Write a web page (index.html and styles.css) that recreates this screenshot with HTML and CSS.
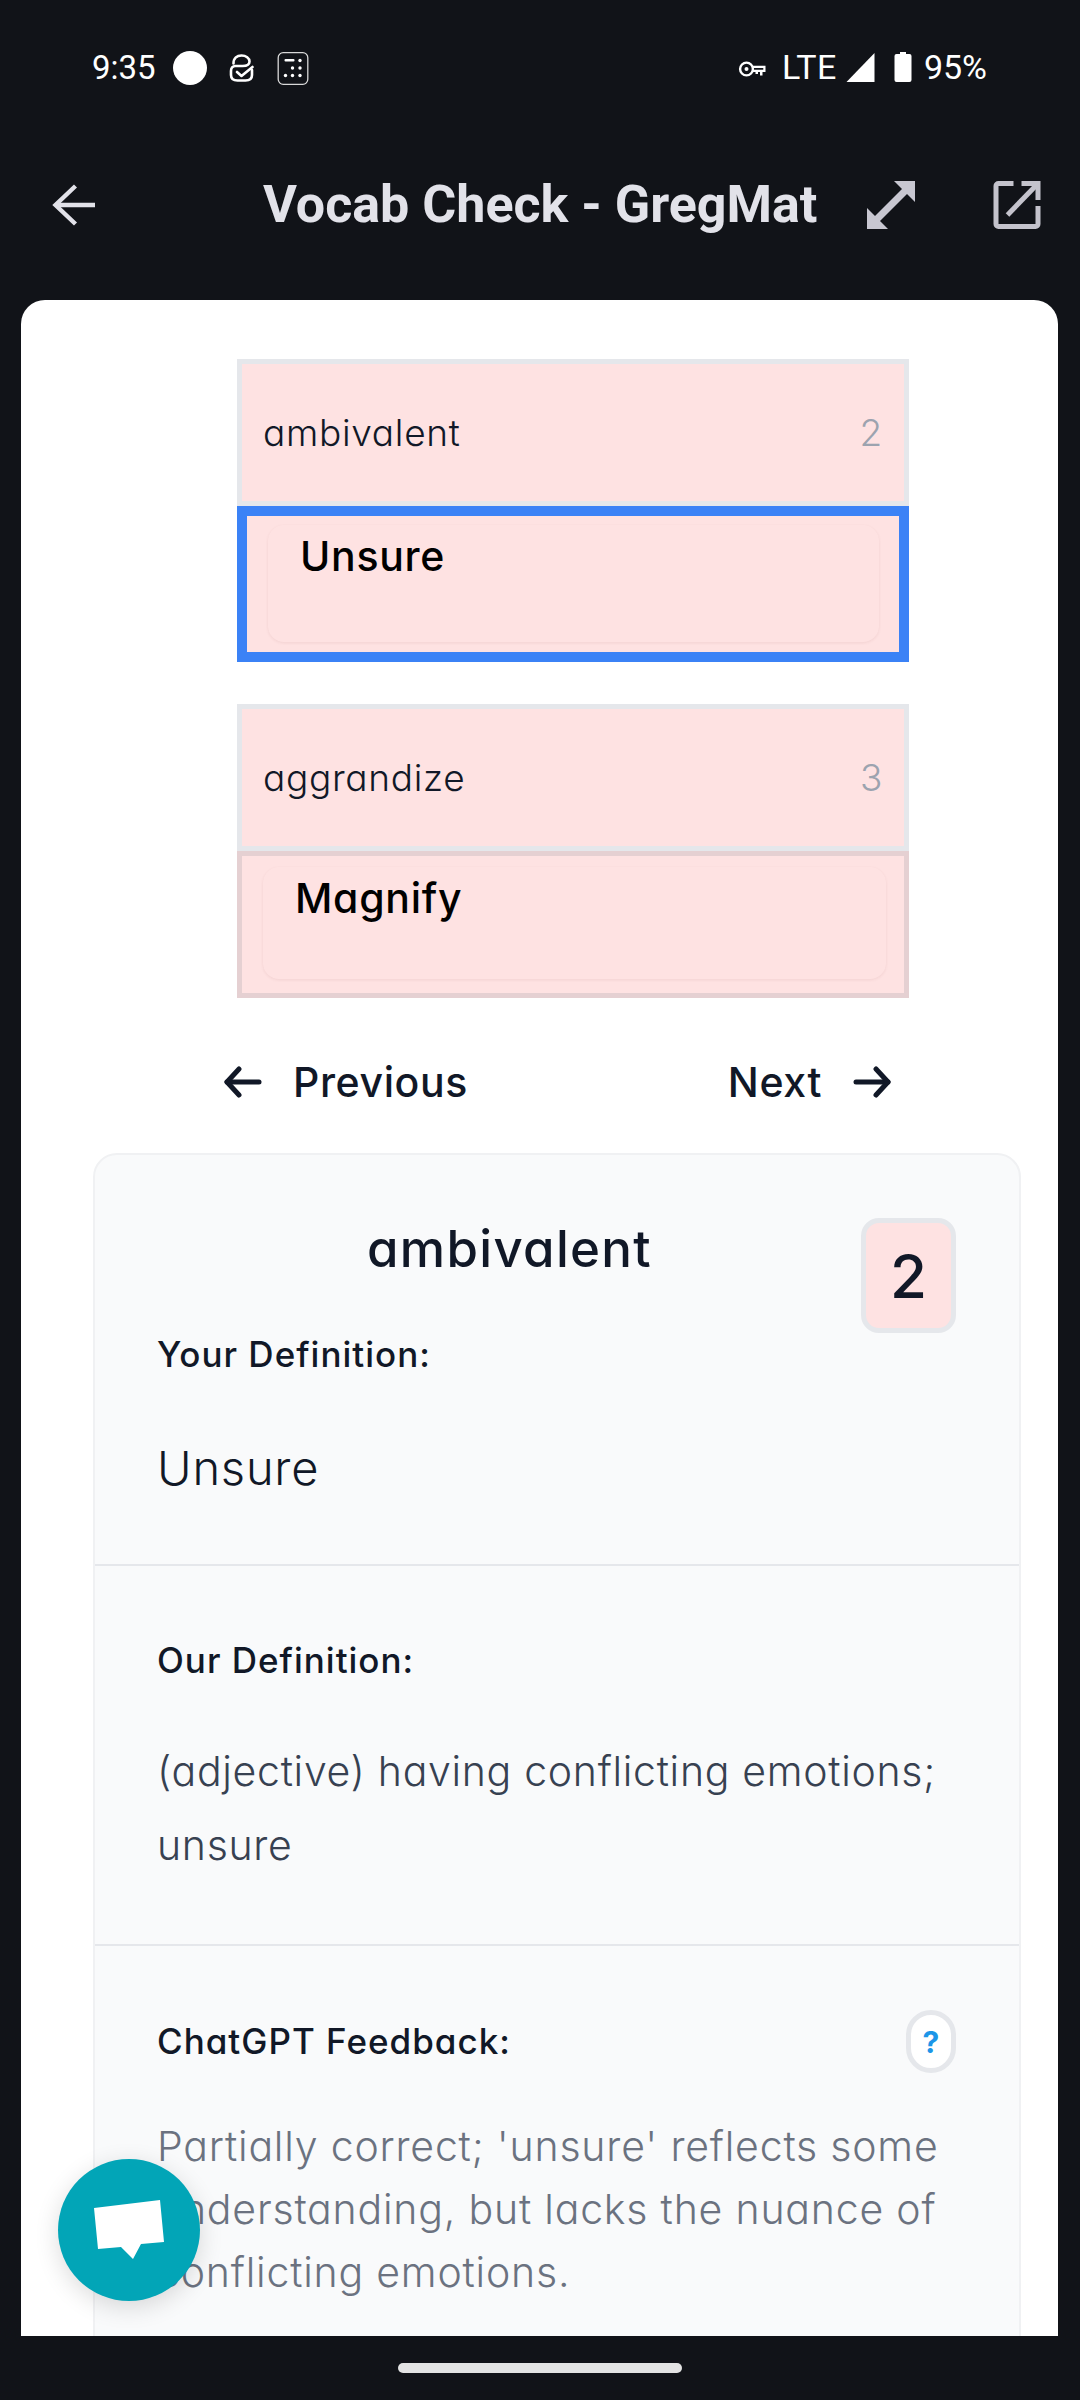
FILE: index.html
```html
<!DOCTYPE html>
<html lang="en">
<head>
<meta charset="utf-8">
<title>Vocab Check - GregMat</title>
<link rel="stylesheet" href="styles.css">
</head>
<body>
<div class="phone">
  <header class="status">
    <div class="status-left">
      <span class="time">9:35</span>
      <span class="dot"></span>
      <svg class="ic-link" viewBox="0 0 24 28" fill="none" stroke="#fff" stroke-width="2.6" stroke-linecap="round" stroke-linejoin="round"><path d="M4 9.5 C4 4 7.5 1.5 12 1.5 C16.5 1.5 20 4 20 7.5 C20 10.5 17 12 13 12 L6 12 C3 12 1.5 14 1.5 17 L1.5 21 C1.5 25 4.5 26.5 8 26.5 L16 26.5 C20 26.5 22.5 24.5 22.5 21 L22.5 16"/><path d="M7.5 18 L12 22 L23 13"/></svg>
      <svg class="ic-calc" viewBox="0 0 31 33" fill="none"><rect x="0.7" y="0.7" width="29.6" height="31.6" rx="5" stroke="#d8d8d8" stroke-width="1.3"/><rect x="7" y="7" width="10" height="2.6" rx="1" fill="#fff"/><g fill="#fff"><circle cx="22.5" cy="8.5" r="1.7"/><circle cx="15" cy="16" r="1.7"/><circle cx="22.5" cy="16" r="1.7"/><circle cx="8" cy="23.5" r="1.7"/><circle cx="15" cy="23.5" r="1.7"/><circle cx="22.5" cy="23.5" r="1.7"/></g></svg>
    </div>
    <div class="status-right">
      <svg class="ic-key" viewBox="0 0 28 16" fill="none"><circle cx="8" cy="8" r="6.4" stroke="#fff" stroke-width="2.4"/><circle cx="8" cy="8" r="2" fill="#fff"/><path d="M14 4.8 H27 V11 H24 V14.5 H21.5 V11 H19.5 V13 H17 V11 H14 V8.8 H24.8 V7 H14 Z" fill="#fff"/></svg>
      <span class="lte">LTE</span>
      <svg class="ic-signal" viewBox="0 0 28 29"><path d="M28 0 V29 H0 Z" fill="#fff"/></svg>
      <svg class="ic-batt" viewBox="0 0 17 30"><path d="M5.5 0 H11.5 V2 H15 A2 2 0 0 1 17 4 V28 A2 2 0 0 1 15 30 H2 A2 2 0 0 1 0 28 V4 A2 2 0 0 1 2 2 H5.5 Z" fill="#fff"/></svg>
      <span class="pct">95%</span>
    </div>
  </header>

  <div class="appbar">
    <svg class="ic-back" viewBox="0 0 42 42" fill="none" stroke="#e2e2e9" stroke-width="4.4"><path d="M43 21 H3"/><path d="M23 2 L3 21 L23 40"/></svg>
    <h1 class="title">Vocab Check - GregMat</h1>
    <svg class="ic-expand" viewBox="0 0 48 48" fill="#c8c7d1"><path d="M48 0 V21 L40 13 L13 40 L21 48 H0 V27 L8 35 L35 8 L27 0 Z"/></svg>
    <svg class="ic-open" viewBox="0 0 47 48" fill="none" stroke="#c4c3cc" stroke-width="5"><path d="M20 2.5 H5 A2.5 2.5 0 0 0 2.5 5 V43 A2.5 2.5 0 0 0 5 45.5 H42 A2.5 2.5 0 0 0 44.5 43 V25"/><path d="M28 2.5 H44.5 V19"/><path d="M44 3 L14 34"/></svg>
  </div>

  <main class="sheet">
    <section class="pair">
      <div class="word-row"><span>ambivalent</span><span class="num">2</span></div>
      <div class="answer answer-active"><div class="answer-box answer-box-active">Unsure</div></div>
    </section>
    <section class="pair pair-second">
      <div class="word-row"><span>aggrandize</span><span class="num">3</span></div>
      <div class="answer"><div class="answer-box">Magnify</div></div>
    </section>

    <nav class="pager">
      <div class="pager-link">
        <svg class="pager-arrow" viewBox="0 0 38 32" fill="none" stroke="#111827" stroke-width="5" stroke-linecap="round" stroke-linejoin="round"><path d="M3 16 H35"/><path d="M15 3 L3 16 L15 29"/></svg>
        <span>Previous</span>
      </div>
      <div class="pager-link">
        <span>Next</span>
        <svg class="pager-arrow" viewBox="0 0 38 32" fill="none" stroke="#111827" stroke-width="5" stroke-linecap="round" stroke-linejoin="round"><path d="M3 16 H35"/><path d="M23 3 L35 16 L23 29"/></svg>
      </div>
    </nav>

    <article class="detail">
      <div class="block block-head">
        <div class="head-row">
          <h2 class="head-word">ambivalent</h2>
          <div class="badge">2</div>
        </div>
        <h3 class="label">Your Definition:</h3>
        <p class="yours">Unsure</p>
      </div>
      <div class="block block-our">
        <h3 class="label">Our Definition:</h3>
        <p class="ours">(adjective) having conflicting emotions; unsure</p>
      </div>
      <div class="block block-gpt">
        <div class="gpt-row">
          <h3 class="label">ChatGPT Feedback:</h3>
          <div class="help">?</div>
        </div>
        <p class="feedback">Partially correct; 'unsure' reflects some understanding, but lacks the nuance of conflicting emotions.</p>
      </div>
    </article>

    <button class="fab" aria-label="Chat">
      <svg class="fab-icon" viewBox="0 0 70 60"><path d="M0 8 L66 0 L70 42 L47 44 L39 59 L27 47 L4 49 Z" fill="#fff"/></svg>
    </button>
  </main>

  <footer class="navbar"><div class="home"></div></footer>
</div>
</body>
</html>
```

FILE: styles.css
```css
* { box-sizing: border-box; }
html, body { margin: 0; padding: 0; }
body { width: 1080px; height: 2400px; overflow: hidden; background: #111318; font-family: "Inter", "Liberation Sans", sans-serif; font-feature-settings: "cv11" 1; }
h1, h2, h3, p { margin: 0; }

.phone { height: 2400px; display: flex; flex-direction: column; }

.status { height: 100px; padding: 51px 93px 0 92px; display: flex; justify-content: space-between; align-items: flex-start; color: #fff; font-family: "Roboto", sans-serif; font-feature-settings: normal; font-size: 34px; line-height: 34px; }
.status-left, .status-right { display: flex; align-items: center; height: 34px; }
.time { font-size: 33px; }
.dot { width: 34px; height: 34px; border-radius: 50%; background: #fff; margin-left: 17px; }
.ic-link { width: 25px; height: 28px; margin-left: 22px; }
.ic-calc { width: 32px; height: 33px; margin-left: 23px; }
.status-right { margin-top: -1px; }
.ic-key { width: 29px; height: 16px; margin-right: 15px; margin-top: 3px; }
.lte { letter-spacing: 0.5px; }
.ic-signal { width: 29px; height: 29px; margin-left: 9px; }
.ic-batt { width: 18px; height: 30px; margin-left: 19px; }
.pct { margin-left: 12px; }

.appbar { height: 200px; display: flex; align-items: center; padding: 10px 39px 0 52px; color: #e2e2e9; }
.ic-back { width: 43px; height: 42px; flex: none; }
.title { margin-left: 168px; font-family: "Roboto", sans-serif; font-feature-settings: normal; font-weight: 700; font-size: 52px; line-height: 56px; white-space: nowrap; }
.ic-expand { width: 48px; height: 48px; margin-left: auto; flex: none; }
.ic-open { width: 48px; height: 48px; margin-left: 78px; flex: none; }

.sheet { flex: 1; min-height: 0; margin: 0 22px 0 21px; background: #fff; border-radius: 24px 24px 0 0; overflow: hidden; position: relative; padding-top: 59px; }

.pair { width: 672px; margin-left: 216px; }
.pair-second { margin-top: 42px; }
.word-row { height: 147px; border: 5px solid #e5e7eb; background: #fee2e2; padding: 0 21px; display: flex; justify-content: space-between; align-items: center; font-size: 37px; font-weight: 300; letter-spacing: 0.7px; color: #111827; }
.num { color: #9ca3af; }
.answer { height: 147px; border: 5px solid #e5d0d2; background: #fee2e2; padding: 11px 18px 14px 21px; display: flex; }
.answer-active { height: 156px; border: 10px solid #3b82f6; padding: 9px 20px 10px 21px; }
.answer-box { flex: 1; border-radius: 16px; padding: 1px 32px 0; font-size: 41px; line-height: 60px; font-weight: 500; letter-spacing: 0.7px; color: #000; box-shadow: 0 1px 3px rgba(120, 60, 60, 0.09); }

.pager { height: 155px; padding-top: 12px; margin: 0 167px 0 203px; display: flex; justify-content: space-between; align-items: center; color: #111827; font-size: 41px; font-weight: 500; letter-spacing: 0.6px; }
.pager-link { display: flex; align-items: center; gap: 31px; }
.pager-arrow { width: 38px; height: 32px; flex: none; }

.detail { width: 928px; margin-left: 72px; border: 2px solid #f0f1f3; border-radius: 24px; background: #f9fafb; }
.block { padding: 0 64px 0 62px; }
.block + .block { border-top: 2px solid #e5e7eb; }
.block-head { height: 409px; padding-top: 63px; }
.head-row { display: flex; height: 115px; justify-content: center; }
.head-word { margin: 1px 50px 0 0; flex: 1; text-align: center; font-size: 51px; line-height: 60px; font-weight: 500; letter-spacing: 1.3px; color: #111827; padding-left: 51px; }
.badge { width: 95px; height: 115px; border: 5px solid #e5e7eb; border-radius: 18px; background: #fee2e2; display: flex; align-items: center; justify-content: center; font-size: 60px; color: #111827; font-weight: 500; margin-right: -1px; }
.label { font-size: 35px; line-height: 44px; font-weight: 500; letter-spacing: 1px; color: #111827; margin-top: -1px; }
.yours { margin-top: 62px; font-size: 47px; line-height: 60px; font-weight: 300; letter-spacing: 0.8px; color: #111827; }
.block-our { height: 380px; padding-top: 73px; }
.ours { margin-top: 52px; font-size: 41px; line-height: 74px; font-weight: 300; letter-spacing: 0.7px; color: #374151; }
.block-gpt { padding-top: 64px; padding-bottom: 240px; }
.gpt-row { display: flex; justify-content: space-between; align-items: center; margin-right: -1px; }
.help { width: 50px; height: 63px; border: 5px solid #e5e7eb; border-radius: 25px; background: #fff; display: flex; align-items: center; justify-content: center; color: #1c96e8; font-size: 30px; font-weight: 700; }
.feedback { margin-top: 42px; font-size: 41px; line-height: 63px; font-weight: 300; letter-spacing: 0.8px; color: #6b7280; }

.fab { position: absolute; left: 37px; top: 1859px; width: 142px; height: 142px; padding: 0; border: 0; border-radius: 50%; background: #02a5b7; box-shadow: 0 6px 24px rgba(0, 0, 0, 0.14); display: flex; align-items: center; justify-content: center; }
.fab-icon { width: 70px; height: 60px; }

.navbar { height: 64px; display: flex; justify-content: center; padding-top: 27px; }
.home { width: 284px; height: 10px; border-radius: 5px; background: #e3e3e3; }
```
